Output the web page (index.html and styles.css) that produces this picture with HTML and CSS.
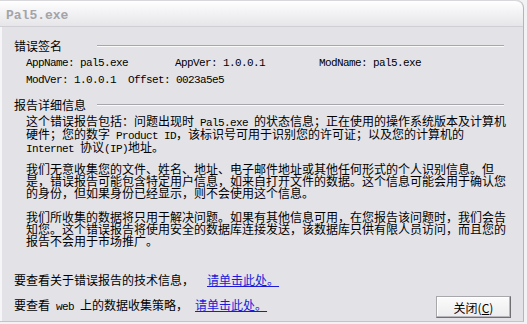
FILE: index.html
```html
<!DOCTYPE html>
<html lang="zh-CN">
<head>
    <meta charset="UTF-8">
    <title>Pal5.exe</title>
    <link rel="stylesheet" href="styles.css">
</head>
<body>
    <div class="window">
        <div class="titlebar">Pal5.exe</div>
        <div class="content">
            <div class="heading"><span class="heading-text">错误签名</span><span class="rule"></span></div>
            <div class="sig">
                <div class="sig-row"><span class="c1">AppName: pal5.exe</span><span class="c2">AppVer: 1.0.0.1</span><span>ModName: pal5.exe</span></div>
                <div class="sig-row"><span>ModVer: 1.0.0.1  Offset: 0023a5e5</span></div>
            </div>

            <div class="heading second"><span class="heading-text">报告详细信息</span><span class="rule"></span></div>
            <p class="para">这个错误报告包括：问题出现时<span class="en"> Pal5.exe </span>的状态信息；正在使用的操作系统版本及计算机<br>硬件；您的数字<span class="en"> Product ID</span>，该标识号可用于识别您的许可证；以及您的计算机的<br><span class="en">Internet </span>协议<span class="en">(IP)</span>地址。</p>
            <p class="para">我们无意收集您的文件、姓名、地址、电子邮件地址或其他任何形式的个人识别信息。但<br>是，错误报告可能包含特定用户信息，如来自打开文件的数据。这个信息可能会用于确认您<br>的身份，但如果身份已经显示，则不会使用这个信息。</p>
            <p class="para">我们所收集的数据将只用于解决问题。如果有其他信息可用，在您报告该问题时，我们会告<br>知您。这个错误报告将使用安全的数据库连接发送，该数据库只供有限人员访问，而且您的<br>报告不会用于市场推广。</p>

            <div class="link-row first">要查看关于错误报告的技术信息，<a href="#" class="link">请单击此处。</a></div>
            <div class="bottom-row">
                <div class="link-row">要查看<span class="en"> web </span>上的数据收集策略，<a href="#" class="link near">请单击此处。</a></div>
                <button class="btn">关闭(<u>C</u>)</button>
            </div>
        </div>
    </div>
</body>
</html>
```

FILE: styles.css
```css
html {
    background: #f2f2f4;
}
body {
    margin: 0;
    font-family: "Noto Sans CJK SC", sans-serif;
    font-size: 12px;
    color: #000;
}
.window {
    width: 523px;
    height: 321px;
    display: flex;
    flex-direction: column;
    border-right: 1px solid #b4b4ba;
    border-bottom: 1px solid #c4c4c8;
    border-top-right-radius: 8px;
    background: #e3e3e7;
    overflow: hidden;
}
.titlebar {
    height: 27px;
    flex: none;
    box-sizing: border-box;
    padding: 0 0 0 6px;
    line-height: 30px;
    font-family: "Liberation Mono", monospace;
    font-weight: bold;
    font-size: 13px;
    color: #a4a4a8;
    background: linear-gradient(#ffffff, #f4f4f6 40%, #e6e6ea);
    border-top: 1px solid #d8d8dc;
    border-top-right-radius: 8px;
    border-bottom: 1px solid #d0d0d4;
}
.content {
    flex: 1;
    padding: 12px 12px 0 12px;
    border-left: 2px solid #f6f6f8;
    box-sizing: border-box;
}
.heading {
    display: flex;
    align-items: center;
    height: 14px;
    line-height: 14px;
}
.heading.second {
    margin-top: 9px;
}
.heading-text {
    width: 83px;
    flex: none;
}
.rule {
    flex: 1;
    margin-right: 7px;
    height: 0;
    border-top: 1px solid #a6a6ac;
    border-bottom: 1px solid #fafafa;
}
.sig {
    padding: 2px 0 0 12px;
    font-family: "Liberation Mono", monospace;
    font-size: 11px;
    letter-spacing: -0.6px;
}
.sig-row {
    display: flex;
    height: 17px;
    line-height: 17px;
    white-space: pre;
}
.c1 {
    width: 149px;
}
.c2 {
    width: 144px;
}
.para {
    margin: 3px 0 0 0;
    padding-left: 12px;
    height: 36px;
    line-height: 12px;
    white-space: nowrap;
}
.para + .para {
    margin-top: 12px;
}
.en {
    font-family: "Liberation Mono", monospace;
    font-size: 11px;
    line-height: 10px;
    letter-spacing: -0.6px;
    white-space: pre;
}
.link-row {
    line-height: 16px;
    height: 16px;
    white-space: nowrap;
}
.link-row.first {
    margin-top: 25px;
}
.link {
    color: #1a1ad8;
    text-decoration: underline;
    margin-left: 13px;
}
.link.near {
    margin-left: 7px;
}
.bottom-row {
    display: flex;
    justify-content: space-between;
    align-items: flex-start;
    margin-top: 9px;
}
.btn {
    width: 75px;
    height: 22px;
    margin-top: -1px;
    padding: 0;
    font-family: "Noto Sans CJK SC", sans-serif;
    font-size: 12px;
    color: #000;
    background: linear-gradient(#fbfbfb, #ececee);
    border: 1px solid #a8a8ac;
    border-right-color: #707074;
    border-bottom-color: #707074;
    box-shadow: inset -1px -1px 0 #b8b8bc, inset 1px 1px 0 #ffffff;
}
```
